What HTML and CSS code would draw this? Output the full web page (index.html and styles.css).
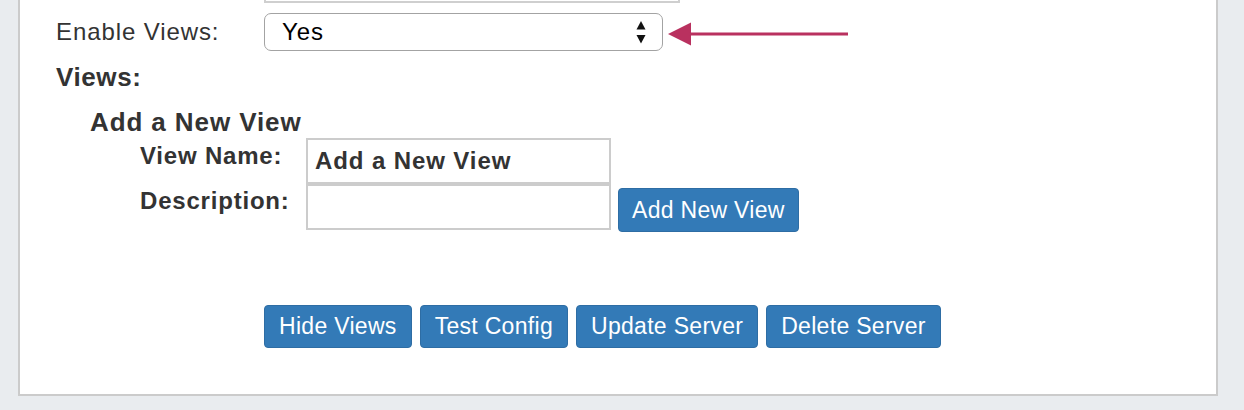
FILE: index.html
```html
<!DOCTYPE html>
<html lang="en">
<head>
<meta charset="utf-8">
<title>Server Views</title>
<link rel="stylesheet" href="styles.css">
</head>
<body>
<div class="panel">
  <div class="prev-row"><div class="prev-input"></div></div>

  <div class="enable-row">
    <div class="field-label">Enable Views:</div>
    <div class="select-box">
      <span class="select-value">Yes</span>
      <svg class="select-arrows" width="10" height="23" viewBox="0 0 10 23">
        <path d="M5 0 L9.5 8.5 L0.5 8.5 Z" fill="#111"/>
        <path d="M0.5 14 L9.5 14 L5 22.5 Z" fill="#111"/>
      </svg>
    </div>
    <svg class="callout-arrow" width="182" height="38" viewBox="0 0 182 38">
      <path d="M1 21 L24 9.5 L24 32.5 Z" fill="#b9315f"/>
      <rect x="22" y="19.5" width="159" height="3" fill="#b9315f"/>
    </svg>
  </div>

  <div class="section-title">Views:</div>
  <div class="sub-title">Add a New View</div>

  <div class="view-form">
    <div class="form-row">
      <div class="form-label first">View Name:</div>
      <div class="text-input">Add a New View</div>
    </div>
    <div class="form-row">
      <div class="form-label second">Description:</div>
      <div class="text-input"></div>
      <button class="btn btn-add">Add New View</button>
    </div>
  </div>

  <div class="actions">
    <button class="btn">Hide Views</button>
    <button class="btn">Test Config</button>
    <button class="btn">Update Server</button>
    <button class="btn">Delete Server</button>
  </div>
</div>
</body>
</html>
```

FILE: styles.css
```css
html, body {
  margin: 0;
  padding: 0;
}

body {
  background: #e9ecef;
  font-family: "Liberation Sans", Arial, Helvetica, sans-serif;
  color: #333;
  height: 410px;
  overflow: hidden;
}

.panel {
  margin: 0 26px 0 18px;
  background: #fff;
  border: 2px solid #cbcbcb;
  border-top: none;
  padding: 0 0 46px 36px;
}

.prev-row {
  padding-left: 208px;
}

.prev-input {
  width: 412px;
  height: 1px;
  border: 2px solid #cfcfcf;
  border-top: none;
}

.enable-row {
  display: flex;
  align-items: center;
  height: 38px;
  margin-top: 10px;
}

.field-label {
  width: 208px;
  font-size: 24px;
  letter-spacing: 0.9px;
  line-height: 26px;
  color: #333;
}

.select-box {
  box-sizing: border-box;
  width: 399px;
  height: 38px;
  border: 1px solid #a3a3a3;
  border-radius: 7px;
  background: #fff;
  display: flex;
  align-items: center;
  justify-content: space-between;
  padding: 0 16px 0 17px;
}

.select-value {
  font-size: 24px;
  letter-spacing: 0.9px;
  color: #000;
  line-height: 26px;
}

.select-arrows {
  display: block;
  margin-top: 1px;
}

.callout-arrow {
  display: block;
  margin-left: 4px;
}

.section-title {
  margin-top: 12px;
  font-size: 26px;
  font-weight: bold;
  letter-spacing: 0.6px;
  line-height: 28px;
}

.sub-title {
  margin-top: 17px;
  padding-left: 34px;
  font-size: 26px;
  font-weight: bold;
  letter-spacing: 0.9px;
  line-height: 28px;
}

.view-form {
  margin-top: 2px;
  padding-left: 84px;
}

.form-row {
  display: flex;
  align-items: flex-start;
}

.form-label {
  width: 166px;
  font-size: 24px;
  font-weight: bold;
  letter-spacing: 0.8px;
  line-height: 26px;
}

.form-label.first {
  padding-top: 5px;
}

.form-label.second {
  padding-top: 4px;
}

.text-input {
  box-sizing: border-box;
  width: 305px;
  height: 46px;
  border: 2px solid #cccccc;
  padding: 0 7px;
  font-size: 24px;
  font-weight: bold;
  letter-spacing: 0.9px;
  line-height: 42px;
  color: #333;
  white-space: nowrap;
}

.btn {
  box-sizing: border-box;
  height: 43px;
  padding: 0 14px;
  background: #337ab7;
  border: 1px solid #2e6da4;
  border-radius: 4px;
  color: #fff;
  font-family: "Liberation Sans", Arial, Helvetica, sans-serif;
  font-size: 23px;
  letter-spacing: 0.3px;
  line-height: 41px;
  white-space: nowrap;
  cursor: pointer;
}

.btn-add {
  height: 44px;
  margin-left: 7px;
  margin-top: 4px;
  padding: 0 13px;
}

.actions {
  display: flex;
  gap: 8px;
  margin-top: 73px;
  padding-left: 208px;
}
```
